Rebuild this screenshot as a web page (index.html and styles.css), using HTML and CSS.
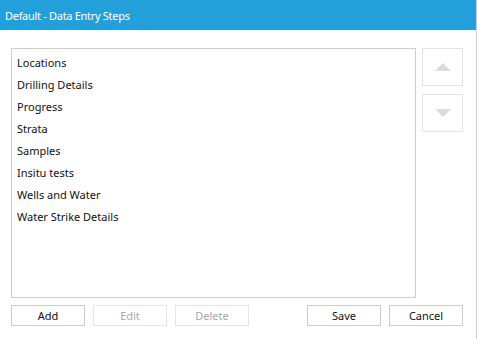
FILE: index.html
```html
<!DOCTYPE html>
<html lang="en">

<head>
    <meta charset="UTF-8">
    <meta name="viewport" content="width=device-width, initial-scale=1.0">
    <title>Default - Data Entry Steps</title>
    <link rel="stylesheet" href="styles.css">
</head>

<body>
    <div class="window">
        <div class="titlebar">Default - Data Entry Steps</div>

        <div class="content">
            <div class="main-row">
                <ul class="steps">
                    <li>Locations</li>
                    <li>Drilling Details</li>
                    <li>Progress</li>
                    <li>Strata</li>
                    <li>Samples</li>
                    <li>Insitu tests</li>
                    <li>Wells and Water</li>
                    <li>Water Strike Details</li>
                </ul>
                <div class="movers">
                    <button class="move-btn" disabled><span class="arrow up"></span></button>
                    <button class="move-btn" disabled><span class="arrow down"></span></button>
                </div>
            </div>

            <div class="button-row">
                <div class="group">
                    <button class="btn">Add</button>
                    <button class="btn" disabled>Edit</button>
                    <button class="btn" disabled>Delete</button>
                </div>
                <div class="group">
                    <button class="btn">Save</button>
                    <button class="btn">Cancel</button>
                </div>
            </div>
        </div>
    </div>
</body>

</html>
```

FILE: styles.css
```css
body {
    margin: 0;
    font-family: "Noto Sans", "Open Sans", sans-serif;
    font-size: 11px;
    color: #111;
    background-color: #fff;
}

.window {
    width: 476px;
    height: 339px;
    border-right: 1px solid #cfcfcf;
}

.titlebar {
    height: 30px;
    line-height: 31px;
    background-color: #239fda;
    color: #fff;
    padding-left: 5px;
    letter-spacing: -0.3px;
}

.content {
    padding: 18px 13px 0 11px;
}

.main-row {
    display: flex;
    gap: 6px;
}

.steps {
    list-style: none;
    margin: 0;
    padding: 3px 0 0 5px;
    width: 406px;
    height: 250px;
    border: 1px solid #cdcdcd;
    box-sizing: border-box;
}

.steps li {
    height: 22px;
    line-height: 22px;
}

.movers {
    display: flex;
    flex-direction: column;
    gap: 8px;
}

.move-btn {
    width: 41px;
    height: 38px;
    border: 1px solid #e3e3e3;
    background-color: #fff;
    display: flex;
    align-items: center;
    justify-content: center;
    padding: 0;
}

.arrow {
    width: 0;
    height: 0;
    border-left: 8px solid transparent;
    border-right: 8px solid transparent;
}

.arrow.up {
    border-bottom: 8px solid #dcdcdc;
}

.arrow.down {
    border-top: 8px solid #dcdcdc;
}

.button-row {
    display: flex;
    justify-content: space-between;
    margin-top: 7px;
    width: 452px;
}

.group {
    display: flex;
    gap: 8px;
}

.btn {
    width: 74px;
    height: 21px;
    padding: 0;
    border: 1px solid #cccccc;
    background-color: #fff;
    font-family: inherit;
    font-size: 11px;
    color: #111;
}

.btn:disabled {
    border-color: #e6e6e6;
    color: #a8a8a8;
}
```
